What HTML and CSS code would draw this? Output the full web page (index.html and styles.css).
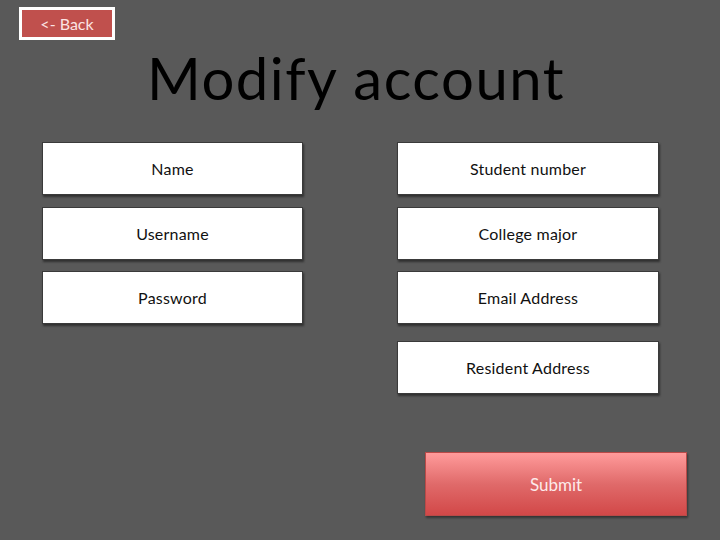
FILE: index.html
```html
<!DOCTYPE html>
<html>
<head>
<meta charset="utf-8">
<link rel="stylesheet" href="styles.css">
</head>
<body>
<div class="page">
  <div class="topbar"><a class="back">&lt;- Back</a></div>
  <h1 class="title">Modify account</h1>
  <div class="fields">
    <div class="col left">
      <div class="field">Name</div>
      <div class="field">Username</div>
      <div class="field">Password</div>
    </div>
    <div class="col">
      <div class="field">Student number</div>
      <div class="field">College major</div>
      <div class="field">Email Address</div>
      <div class="field extra">Resident Address</div>
    </div>
  </div>
  <div class="actions"><div class="submit">Submit</div></div>
</div>
</body>
</html>
```
FILE: styles.css
```css
html, body {
  margin: 0;
  padding: 0;
  background: #595959;
}
.page {
  width: 720px;
  height: 540px;
  font-family: Lato, "Open Sans", sans-serif;
  overflow: hidden;
}
.topbar {
  padding: 7px 0 0 19px;
  height: 32px;
}
.back {
  display: flex;
  align-items: center;
  justify-content: center;
  box-sizing: border-box;
  width: 96px;
  height: 33px;
  border: 3px solid #ffffff;
  background: #c0504d;
  color: #fbe3e3;
  font-size: 16px;
}
.title {
  margin: -1px 0 0 0;
  padding-right: 8px;
  height: 104px;
  font-weight: normal;
  font-size: 58px;
  letter-spacing: 1.5px;
  line-height: 80px;
  text-align: center;
  color: #000;
}
.fields {
  display: flex;
  gap: 94px;
  padding-left: 42px;
}
.col {
  display: flex;
  flex-direction: column;
  gap: 11.5px;
  width: 262px;
}
.col.left {
  width: 261px;
}
.field {
  box-sizing: border-box;
  height: 53px;
  background: #fff;
  border: 1px solid #3a3a3a;
  box-shadow: 1px 2px 2px rgba(0,0,0,0.45);
  display: flex;
  align-items: center;
  justify-content: center;
  font-size: 16px;
  letter-spacing: 0.2px;
  color: #111;
}
.field.extra {
  margin-top: 5.5px;
}
.actions {
  padding: 58px 0 0 425px;
}
.submit {
  box-sizing: border-box;
  width: 262px;
  height: 64px;
  border: 1px solid #b94a48;
  background: linear-gradient(#ff9b9b, #e06a6a 50%, #d24848);
  box-shadow: 1px 2px 2px rgba(0,0,0,0.4);
  display: flex;
  align-items: center;
  justify-content: center;
  color: #fdeaea;
  font-size: 17px;
}
```
